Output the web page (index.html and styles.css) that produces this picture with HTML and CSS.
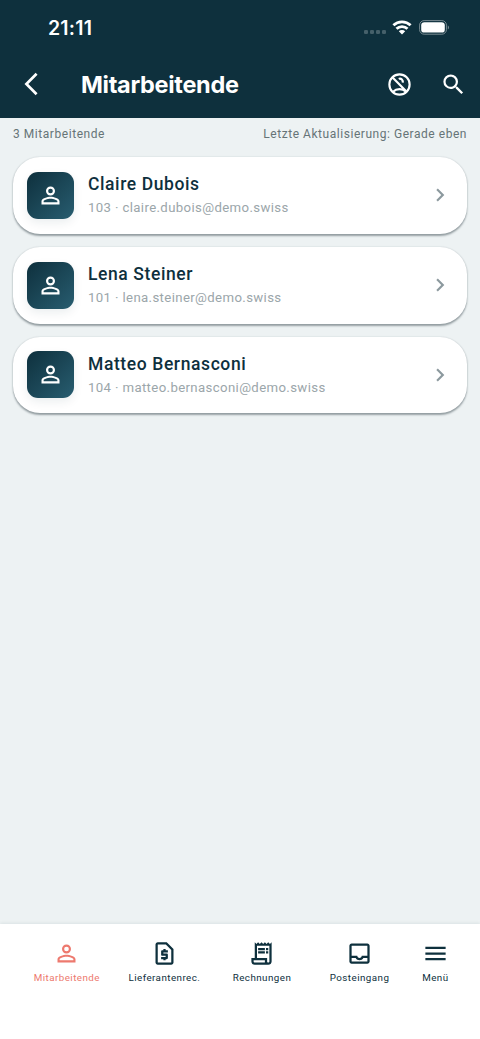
FILE: index.html
```html
<!DOCTYPE html>
<html lang="de">
<head>
<meta charset="utf-8">
<meta name="viewport" content="width=device-width, initial-scale=1">
<title>Mitarbeitende</title>
<link rel="stylesheet" href="styles.css">
</head>
<body>
<svg class="defs" width="0" height="0" aria-hidden="true">
  <symbol id="person" viewBox="0 0 24 24"><path d="M12 5.9a2.1 2.1 0 1 1 0 4.2 2.1 2.1 0 0 1 0-4.2m0 9c2.97 0 6.1 1.46 6.1 2.1v1.1H5.9V17c0-.64 3.13-2.1 6.1-2.1M12 4C9.79 4 8 5.79 8 8s1.79 4 4 4 4-1.79 4-4-1.79-4-4-4m0 9c-2.67 0-8 1.34-8 4v3h16v-3c0-2.66-5.33-4-8-4"/></symbol>
  <symbol id="chevron" viewBox="0 0 24 24"><path d="M10 6 8.59 7.41 13.17 12l-4.58 4.59L10 18l6-6z"/></symbol>
</svg>
<div class="app">
  <header class="header">
    <div class="status">
      <span class="time">21:11</span>
      <span class="signals">
        <svg width="22" height="6" viewBox="0 0 22 6" fill="#45606a"><rect y="1" width="4" height="4" rx="1.3"/><rect x="6" y="1" width="4" height="4" rx="1.3"/><rect x="12" y="1" width="4" height="4" rx="1.3"/><rect x="18" y="1" width="4" height="4" rx="1.3"/></svg>
        <svg class="wifi" width="20" height="15" viewBox="0 0 20 15"><g fill="none" stroke="#fff" stroke-width="2.8"><path d="M1.4 5.3a12.4 12.4 0 0 1 17.2 0"/><path d="M4.5 8.8a7.8 7.8 0 0 1 11 0"/></g><path d="M6.8 11.3a4.6 4.6 0 0 1 6.4 0L10 14.6z" fill="#fff"/></svg>
        <svg class="battery" width="31" height="15" viewBox="0 0 31 15"><rect x=".6" y=".6" width="26.8" height="13.6" rx="4.5" fill="none" stroke="#798b92"/><rect x="2.2" y="2.2" width="23.6" height="10.4" rx="3.2" fill="#fff"/><path d="M28.8 5.2c1.6.7 1.6 3.7 0 4.4z" fill="#798b92"/></svg>
      </span>
    </div>
    <div class="toolbar">
      <svg class="back" width="14" height="24" viewBox="0 0 14 24"><path d="M12.6 1.8 2.4 12l10.2 10.2" fill="none" stroke="#fff" stroke-width="2.7"/></svg>
      <h1 class="title">Mitarbeitende</h1>
      <svg class="icon outline" viewBox="0 0 24 24"><circle cx="12" cy="12" r="9"/><path d="m5.4 5.4 13.2 13.2M6.2 18.4c3.3-3.1 8.3-3.1 11.6 0M11.3 7a2.6 2.6 0 0 1 3.4 3.4"/></svg>
      <svg class="icon search" viewBox="0 0 24 24"><path d="M15.5 14h-.79l-.28-.27A6.47 6.47 0 0 0 16 9.5 6.5 6.5 0 1 0 9.5 16c1.61 0 3.09-.59 4.23-1.57l.27.28v.79l5 4.99L20.49 19zm-6 0C7.01 14 5 11.99 5 9.5S7.01 5 9.5 5 14 7.01 14 9.5 11.99 14 9.5 14"/></svg>
    </div>
  </header>
  <main class="content">
    <div class="summary"><span class="count">3 Mitarbeitende</span><span class="updated">Letzte Aktualisierung: Gerade eben</span></div>
    <div class="list">
      <article class="card">
        <div class="avatar"><svg class="icon"><use href="#person"/></svg></div>
        <div class="details"><h2 class="name">Claire Dubois</h2><p class="meta">103 · claire.dubois@demo.swiss</p></div>
        <svg class="chevron"><use href="#chevron"/></svg>
      </article>
      <article class="card">
        <div class="avatar"><svg class="icon"><use href="#person"/></svg></div>
        <div class="details"><h2 class="name">Lena Steiner</h2><p class="meta">101 · lena.steiner@demo.swiss</p></div>
        <svg class="chevron"><use href="#chevron"/></svg>
      </article>
      <article class="card">
        <div class="avatar"><svg class="icon"><use href="#person"/></svg></div>
        <div class="details"><h2 class="name">Matteo Bernasconi</h2><p class="meta">104 · matteo.bernasconi@demo.swiss</p></div>
        <svg class="chevron"><use href="#chevron"/></svg>
      </article>
    </div>
  </main>
  <nav class="nav">
    <a class="tab active"><svg class="icon"><use href="#person"/></svg><span>Mitarbeitende</span></a>
    <a class="tab"><svg class="icon" viewBox="0 0 24 24"><path d="M14 2H6c-1.1 0-2 .9-2 2v16c0 1.1.9 2 2 2h12c1.1 0 2-.9 2-2V8zm4 18H6V4h7.2L18 8.8z"/><path d="M11 18h2v-1h1c.55 0 1-.45 1-1v-3c0-.55-.45-1-1-1h-3v-1h4V9h-2V8h-2v1h-1c-.55 0-1 .45-1 1v3c0 .55.45 1 1 1h3v1H9v2h2z"/></svg><span>Lieferantenrec.</span></a>
    <a class="tab"><svg class="icon" viewBox="0 0 24 24"><path d="M19.5 3.5 18 2l-1.5 1.5L15 2l-1.5 1.5L12 2l-1.5 1.5L9 2 7.5 3.5 6 2v14H3v3c0 1.66 1.34 3 3 3h12c1.66 0 3-1.34 3-3V2zM15 20H6c-.55 0-1-.45-1-1v-1h10zm4-1c0 .55-.45 1-1 1s-1-.45-1-1v-3H8V5h11zM9 7h6v2H9zm7 0h2v2h-2zM9 10h6v2H9zm7 0h2v2h-2z"/></svg><span>Rechnungen</span></a>
    <a class="tab"><svg class="icon" viewBox="0 0 24 24"><path d="M19 3H5c-1.1 0-2 .9-2 2v14c0 1.1.9 2 2 2h14c1.1 0 2-.9 2-2V5c0-1.1-.9-2-2-2m0 16H5v-3h3.56c.69 1.19 1.97 2 3.45 2s2.75-.81 3.45-2H19zm0-5h-4.99c0 1.1-.9 2-2 2s-2-.9-2-2H5V5h14z"/></svg><span>Posteingang</span></a>
    <a class="tab menu"><svg class="icon" viewBox="0 0 24 24"><path d="M3 18h18v-2H3zm0-5h18v-2H3zm0-7v2h18V6z"/></svg><span>Menü</span></a>
  </nav>
</div>
</body>
</html>
```

FILE: styles.css
```css
* { box-sizing: border-box; }
body { margin: 0; font-family: Roboto, "Noto Sans", sans-serif; color: #0e303d; background: #edf2f3; }
h1, h2, p { margin: 0; }
.defs { display: none; }
.app { height: 1039px; display: flex; flex-direction: column; }
.icon { width: 27px; height: 27px; flex: none; fill: currentColor; }
.outline { fill: none; stroke: currentColor; stroke-width: 1.9; }
.header { height: 118px; background: #0e303d; color: #fff; }
.status { height: 54px; padding: 0 30px 0 48px; display: flex; align-items: center; justify-content: space-between; }
.time { padding-top: 1px; font: 600 19.5px/24px Inter, sans-serif; letter-spacing: .2px; }
.signals { display: flex; align-items: center; }
.signals > svg:first-child { margin-top: 9px; }
.wifi { margin-left: 6px; }
.battery { margin-left: 7px; }
.toolbar { height: 60px; padding: 0 13.5px 0 24px; display: flex; align-items: center; }
.title { flex: 1; margin-left: 43px; padding-top: 2px; font: 700 23.5px/30px Inter, sans-serif; letter-spacing: -.3px; }
.search { margin-left: 26.5px; }
.content { flex: 1; padding: 0 13px; }
.summary { height: 39px; padding-top: 7px; display: flex; justify-content: space-between; font-size: 12px; line-height: 18px; color: #667477; white-space: nowrap; }
.count { letter-spacing: .55px; }
.updated { letter-spacing: .54px; }
.list { display: grid; gap: 13px; }
.card { height: 76.8px; padding: 0 14px; display: flex; align-items: center; border-radius: 27px; background: #fff; box-shadow: 0 1.5px 2px rgba(30, 48, 54, .42), 0 0 2px rgba(30, 48, 54, .1); }
.avatar { width: 47px; height: 47px; display: grid; place-items: center; border-radius: 11px; color: #fff; background: linear-gradient(135deg, #0e303d, #285d70); box-shadow: 0 4px 10px rgba(14, 48, 61, .08); }
.details { flex: 1; margin-left: 14px; }
.name { font-size: 17.5px; line-height: 24px; font-weight: 500; letter-spacing: .6px; }
.meta { font-size: 13.2px; line-height: 20px; margin-top: 2px; color: #9ba6aa; letter-spacing: .37px; }
.chevron { width: 26px; height: 26px; fill: #8c999e; }
.nav { height: 115px; padding: 16px 0 0 18px; display: grid; grid-template-columns: repeat(4, 97.6px) 54px; align-items: start; background: #fff; box-shadow: 0 -1px 3px rgba(14, 48, 61, .08); }
.tab { display: flex; flex-direction: column; align-items: center; font-size: 9.8px; line-height: 14px; letter-spacing: .45px; white-space: nowrap; }
.tab span { margin-top: 4px; }
.active { color: #ed796e; }
```
